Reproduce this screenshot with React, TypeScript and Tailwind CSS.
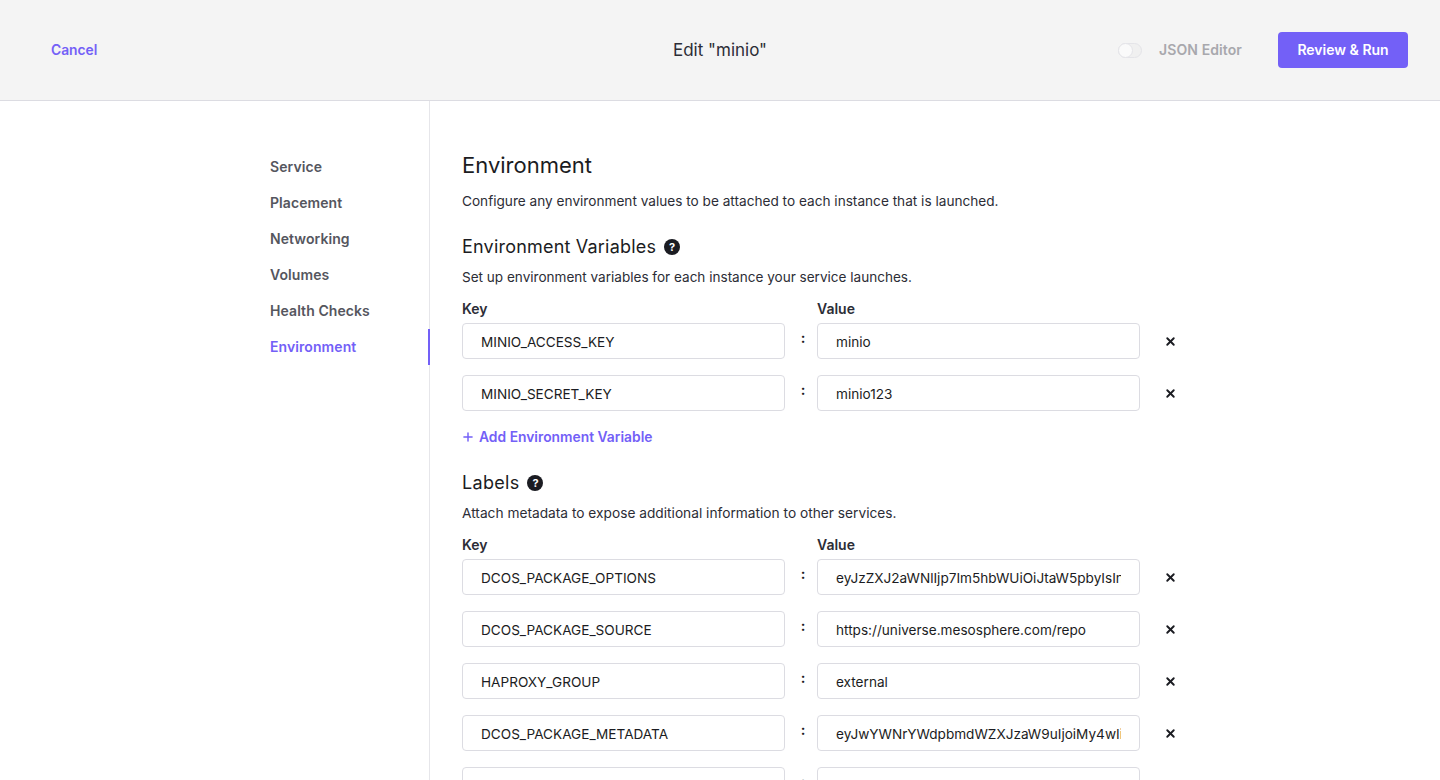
import { Plus, X } from 'lucide-react'

const navItems = ['Service', 'Placement', 'Networking', 'Volumes', 'Health Checks', 'Environment']

const envVars = [
  ['MINIO_ACCESS_KEY', 'minio'],
  ['MINIO_SECRET_KEY', 'minio123'],
]

const labels = [
  ['DCOS_PACKAGE_OPTIONS', 'eyJzZXJ2aWNlIjp7Im5hbWUiOiJtaW5pbyIsInVzZXIiOiJyb290In19'],
  ['DCOS_PACKAGE_SOURCE', 'https://universe.mesosphere.com/repo'],
  ['HAPROXY_GROUP', 'external'],
  ['DCOS_PACKAGE_METADATA', 'eyJwYWNrYWdpbmdWZXJzaW9uIjoiMy4wIiwibmFtZSI6Im1pbmlvIn0'],
  ['', ''],
]

function HelpIcon() {
  return (
    <span className="ml-2 flex h-4 w-4 items-center justify-center rounded-full bg-[#1b1c22] text-[11px] leading-none font-bold text-white">
      ?
    </span>
  )
}

function KeyValueRows({ rows }: { rows: string[][] }) {
  return (
    <div>
      <div className="flex h-[20px] text-sm leading-5 font-semibold text-[#2c2d36]">
        <div className="w-[355px]">Key</div>
        <div>Value</div>
      </div>
      <div className="flex flex-col gap-4 pt-1">
        {rows.map(([key, value], i) => (
          <div key={i} className="flex items-center">
            <input
              readOnly
              value={key}
              className="h-9 w-[323px] rounded border border-[#dcdce2] bg-white px-[18px] pt-[2px] text-[13.6px] text-[#1b1c22] outline-none"
            />
            <div className="flex w-8 justify-center pb-[6px] pl-1 text-sm font-bold text-[#1b1c22]">:</div>
            <input
              readOnly
              value={value}
              className="h-9 w-[323px] rounded border border-[#dcdce2] bg-white px-[18px] pt-[2px] text-[13.6px] text-[#1b1c22] outline-none"
            />
            {(key || value) && <X className="ml-6 h-[13px] w-[13px] text-[#1b1c22]" strokeWidth={3.5} />}
          </div>
        ))}
      </div>
    </div>
  )
}

export default function App() {
  return (
    <div className="h-[780px] overflow-hidden bg-white font-['Inter',sans-serif] text-[#1b1c22]">
      {/* Header */}
      <header className="flex h-[101px] items-center border-b border-[#dcdce2] bg-[#f4f4f4] pr-8 pl-[51px]">
        <div className="flex-1">
          <a className="block text-[13.8px] leading-5 font-semibold text-[#7360f7]">Cancel</a>
        </div>
        <h1 className="pr-[19px] text-[17px] leading-6 text-[#2c2d36]">Edit "minio"</h1>
        <div className="flex flex-1 items-center justify-end">
          <div className="relative h-[15px] w-6 rounded-full border border-[#e4e4e8] bg-[#f0f0f0]">
            <span className="absolute -top-px -left-px h-[15px] w-[15px] rounded-full border border-[#e4e4e8] bg-[#fafafa]" />
          </div>
          <span className="ml-[17px] text-sm font-semibold tracking-[0.1px] text-[#a8a8ad]">JSON Editor</span>
          <button className="ml-9 h-9 w-[130px] rounded bg-[#7360f7] text-sm font-semibold text-white">
            Review &amp; Run
          </button>
        </div>
      </header>

      <div className="flex h-[679px]">
        {/* Sidebar */}
        <nav className="w-[430px] shrink-0 border-r border-[#e6e6ea] pt-[48px]">
          <ul>
            {navItems.map((item) => (
              <li
                key={item}
                className={
                  item === 'Environment'
                    ? 'relative -mr-px flex h-9 items-center border-r-2 border-[#7360f7] pl-[270px] text-sm font-semibold tracking-[0.08px] text-[#7360f7]'
                    : 'flex h-9 items-center pl-[270px] text-sm font-semibold tracking-[0.08px] text-[#55565e]'
                }
              >
                {item}
              </li>
            ))}
          </ul>
        </nav>

        {/* Form */}
        <main className="flex-1 pt-[49px] pl-8">
          <h2 className="text-[22px] leading-[30px] text-[#1b1c22]">Environment</h2>
          <p className="mt-[11px] text-[13.64px] leading-5 text-[#2c2d36]">
            Configure any environment values to be attached to each instance that is launched.
          </p>

          <div className="mt-[24px] flex h-6 items-center">
            <h3 className="text-[18px] leading-6 tracking-[0.2px] text-[#1b1c22]">Environment Variables</h3>
            <HelpIcon />
          </div>
          <p className="mt-[8px] mb-[12px] text-[13.55px] leading-5 text-[#2c2d36]">
            Set up environment variables for each instance your service launches.
          </p>
          <KeyValueRows rows={envVars} />

          <a className="mt-[16px] flex h-5 items-center text-[13.85px] font-semibold text-[#7360f7]">
            <Plus className="mr-1 -ml-px h-[14px] w-[14px]" strokeWidth={2.5} />
            Add Environment Variable
          </a>

          <div className="mt-[24px] flex h-6 items-center">
            <h3 className="text-[18px] leading-6 tracking-[0.3px] text-[#1b1c22]">Labels</h3>
            <HelpIcon />
          </div>
          <p className="mt-[8px] mb-[12px] text-[13.73px] leading-5 text-[#2c2d36]">
            Attach metadata to expose additional information to other services.
          </p>
          <KeyValueRows rows={labels} />
        </main>
      </div>
    </div>
  )
}
